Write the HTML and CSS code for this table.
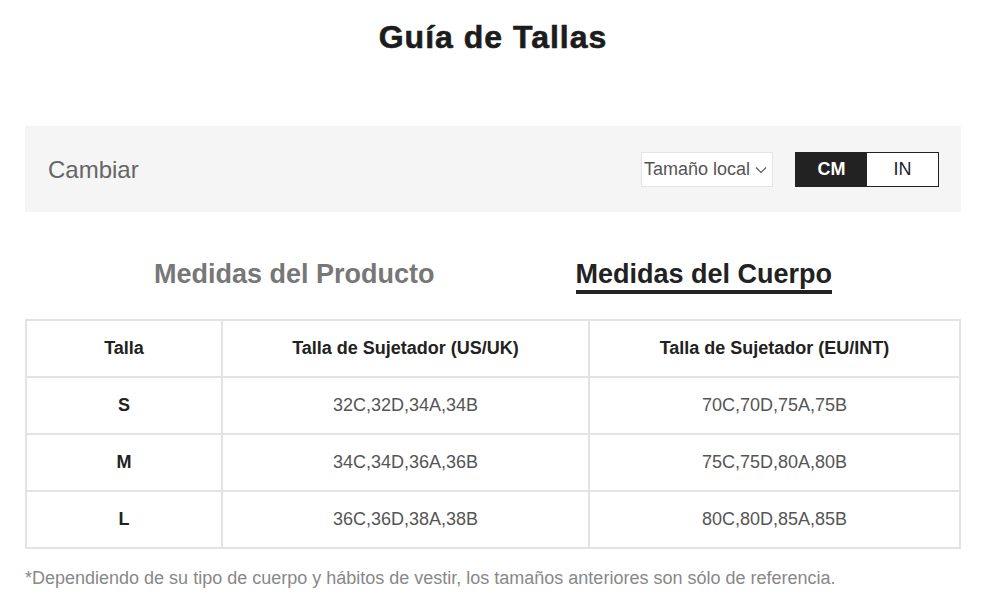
FILE: index.html
```html
<!DOCTYPE html>
<html lang="es">
<head>
<meta charset="utf-8">
<title>Guía de Tallas</title>
<link rel="stylesheet" href="styles.css">
</head>
<body>
<div class="page">
  <h1 class="title">Guía de Tallas</h1>
  <div class="bar">
    <span class="bar-label">Cambiar</span>
    <div class="bar-controls">
      <div class="select">
        <span>Tamaño local</span>
        <svg class="chev" width="12" height="8" viewBox="0 0 12 8"><path d="M1 1.5 L6 6.5 L11 1.5" fill="none" stroke="#555" stroke-width="1.1"/></svg>
      </div>
      <div class="units">
        <span class="unit active">CM</span>
        <span class="unit">IN</span>
      </div>
    </div>
  </div>
  <div class="tabs">
    <span class="tab">Medidas del Producto</span>
    <span class="tab active">Medidas del Cuerpo</span>
  </div>
  <table class="sizes">
    <thead>
      <tr><th class="c1">Talla</th><th class="c2">Talla de Sujetador (US/UK)</th><th>Talla de Sujetador (EU/INT)</th></tr>
    </thead>
    <tbody>
      <tr><td class="size">S</td><td>32C,32D,34A,34B</td><td>70C,70D,75A,75B</td></tr>
      <tr><td class="size">M</td><td>34C,34D,36A,36B</td><td>75C,75D,80A,80B</td></tr>
      <tr><td class="size">L</td><td>36C,36D,38A,38B</td><td>80C,80D,85A,85B</td></tr>
    </tbody>
  </table>
  <p class="note">*Dependiendo de su tipo de cuerpo y hábitos de vestir, los tamaños anteriores son sólo de referencia.</p>
</div>
</body>
</html>
```
FILE: styles.css
```css
* { box-sizing: border-box; }
body {
  margin: 0;
  background: #fff;
  font-family: "Liberation Sans", Arial, sans-serif;
  color: #222;
}
.page {
  width: 936px;
  margin-left: 25px;
  padding-top: 18px;
}
.title {
  margin: 0;
  text-align: center;
  font-size: 32px;
  font-weight: 900;
  line-height: 38px;
  color: #1c1c1c;
  letter-spacing: 1px;
  -webkit-text-stroke: 0.6px #1c1c1c;
}
.bar {
  margin-top: 70px;
  height: 86px;
  background: #f5f5f5;
  display: flex;
  align-items: center;
  justify-content: space-between;
  padding: 0 22px 0 23px;
}
.bar-label {
  font-size: 24px;
  color: #666;
  margin-top: 2px;
}
.bar-controls {
  display: flex;
  align-items: center;
  gap: 22px;
}
.select {
  width: 132px;
  height: 35px;
  background: #fff;
  border: 1px solid #e4e4e4;
  display: flex;
  align-items: center;
  padding-left: 2px;
  gap: 5px;
  font-size: 18px;
  color: #555;
}
.chev { margin-top: 2px; }
.units {
  display: flex;
  border: 1px solid #222;
  height: 35px;
}
.unit {
  width: 71px;
  display: flex;
  align-items: center;
  justify-content: center;
  font-size: 18px;
  color: #222;
  background: #fff;
}
.unit.active {
  background: #222;
  color: #fff;
  font-weight: bold;
}
.tabs {
  display: flex;
  justify-content: center;
  gap: 141px;
  margin-top: 46px;
  height: 61px;
}
.tab {
  font-size: 27px;
  font-weight: bold;
  color: #777;
  height: 36px;
  line-height: 32px;
}
.tab.active {
  color: #222;
  border-bottom: 4px solid #222;
}
.sizes {
  width: 936px;
  border-collapse: collapse;
  border: 2px solid #e3e3e3;
  font-size: 18px;
}
.sizes th, .sizes td {
  border: 2px solid #e3e3e3;
  height: 57px;
  text-align: center;
  padding: 0;
}
.sizes th {
  font-weight: bold;
  color: #222;
}
.sizes td { color: #555; }
.sizes td.size { font-weight: bold; color: #222; }
.c1 { width: 196px; }
.c2 { width: 367px; }
.note {
  margin: 19px 0 0;
  font-size: 18px;
  color: #888;
}
```
